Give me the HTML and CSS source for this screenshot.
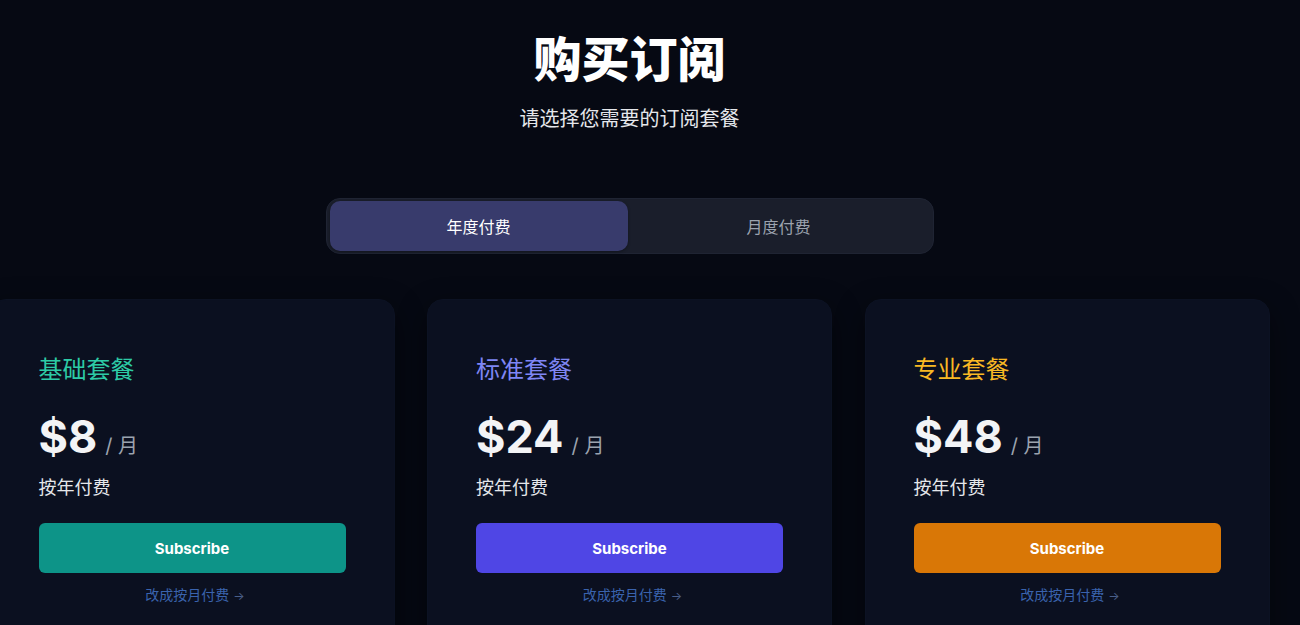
FILE: index.html
```html
<!DOCTYPE html>
<html lang="zh-CN">
<head>
<meta charset="utf-8">
<title>购买订阅</title>
<link rel="stylesheet" href="styles.css">
</head>
<body>
<main class="page">
  <header class="hero">
    <h1 class="title">购买订阅</h1>
    <p class="subtitle">请选择您需要的订阅套餐</p>
  </header>

  <div class="toggle">
    <button class="toggle-btn active">年度付费</button>
    <button class="toggle-btn">月度付费</button>
  </div>

  <section class="plans">
    <article class="card">
      <h2 class="plan-name teal">基础套餐</h2>
      <div class="price"><span class="amount">$8</span><span class="per">/ 月</span></div>
      <p class="billing">按年付费</p>
      <button class="subscribe bg-teal">Subscribe</button>
      <a class="switch" href="#">改成按月付费 <span class="arrow">→</span></a>
    </article>

    <article class="card">
      <h2 class="plan-name indigo">标准套餐</h2>
      <div class="price"><span class="amount">$24</span><span class="per">/ 月</span></div>
      <p class="billing">按年付费</p>
      <button class="subscribe bg-indigo">Subscribe</button>
      <a class="switch" href="#">改成按月付费 <span class="arrow">→</span></a>
    </article>

    <article class="card">
      <h2 class="plan-name amber">专业套餐</h2>
      <div class="price"><span class="amount">$48</span><span class="per">/ 月</span></div>
      <p class="billing">按年付费</p>
      <button class="subscribe bg-amber">Subscribe</button>
      <a class="switch" href="#">改成按月付费 <span class="arrow">→</span></a>
    </article>
  </section>
</main>
</body>
</html>
```

FILE: styles.css
```css
* { box-sizing: border-box; }

html, body {
  margin: 0;
  padding: 0;
  height: 100%;
  overflow: hidden;
}

body {
  background: #060913;
  color: #f3f4f6;
  font-family: Inter, "Noto Sans CJK SC", sans-serif;
}

.page {
  width: 1259px;
  display: flex;
  flex-direction: column;
  align-items: center;
  padding-top: 31px;
}

.hero {
  text-align: center;
}

.title {
  margin: 0;
  font-size: 48px;
  line-height: 58px;
  font-weight: 900;
  color: #ffffff;
}

.subtitle {
  margin: 16px 0 0;
  font-size: 20px;
  line-height: 28px;
  color: #e5e7eb;
}

.toggle {
  margin-top: 65px;
  width: 608px;
  height: 56px;
  display: flex;
  padding: 2px 3px;
  border: 1px solid #1f2433;
  border-radius: 14px;
  background: #1a1e2b;
}

.toggle-btn {
  flex: 1;
  height: 50px;
  border: none;
  border-radius: 10px;
  background: transparent;
  color: #9ca3af;
  font-family: Inter, "Noto Sans CJK SC", sans-serif;
  font-size: 16px;
  cursor: pointer;
}

.toggle-btn.active {
  flex: 0 0 298px;
  background: #383b6c;
  color: #ffffff;
  box-shadow: 0 1px 3px rgba(0, 0, 0, 0.35);
}

.plans {
  margin-top: 45px;
  width: 100%;
  display: flex;
  justify-content: center;
  gap: 32.5px;
}

.card {
  flex: 0 0 405px;
  width: 405px;
  padding: 54px 48px 48px;
  background: #0b1020;
  border: 1px solid #0c1223;
  border-radius: 16px;
  box-shadow: 0 10px 30px rgba(0, 0, 0, 0.45);
}

.plan-name {
  margin: 0;
  font-size: 24px;
  line-height: 32px;
  font-weight: 400;
}

.teal { color: #2dcba6; }
.indigo { color: #7f86f4; }
.amber { color: #f9b924; }

.price {
  margin-top: 28px;
  display: flex;
  align-items: baseline;
  height: 46px;
}

.amount {
  font-size: 45px;
  line-height: 46px;
  font-weight: 700;
  color: #f3f4f6;
}

.per {
  margin-left: 8px;
  font-size: 20px;
  color: #9ca3af;
}

.billing {
  margin: 14px 0 0;
  font-size: 18px;
  line-height: 28px;
  color: #e5e7eb;
}

.subscribe {
  display: block;
  width: 100%;
  height: 50px;
  margin-top: 21px;
  border: none;
  border-radius: 6px;
  color: #ffffff;
  font-family: Inter, "Noto Sans CJK SC", sans-serif;
  font-size: 15px;
  font-weight: 700;
  cursor: pointer;
}

.bg-teal { background: #0d9488; }
.bg-indigo { background: #4f46e5; }
.bg-amber { background: #d97706; }

.switch {
  display: block;
  margin-top: 12px;
  padding-left: 6px;
  text-align: center;
  font-size: 14px;
  line-height: 20px;
  color: #3a63ad;
  text-decoration: none;
}

.arrow {
  font-size: 12px;
  color: #4a5f8a;
}
```
